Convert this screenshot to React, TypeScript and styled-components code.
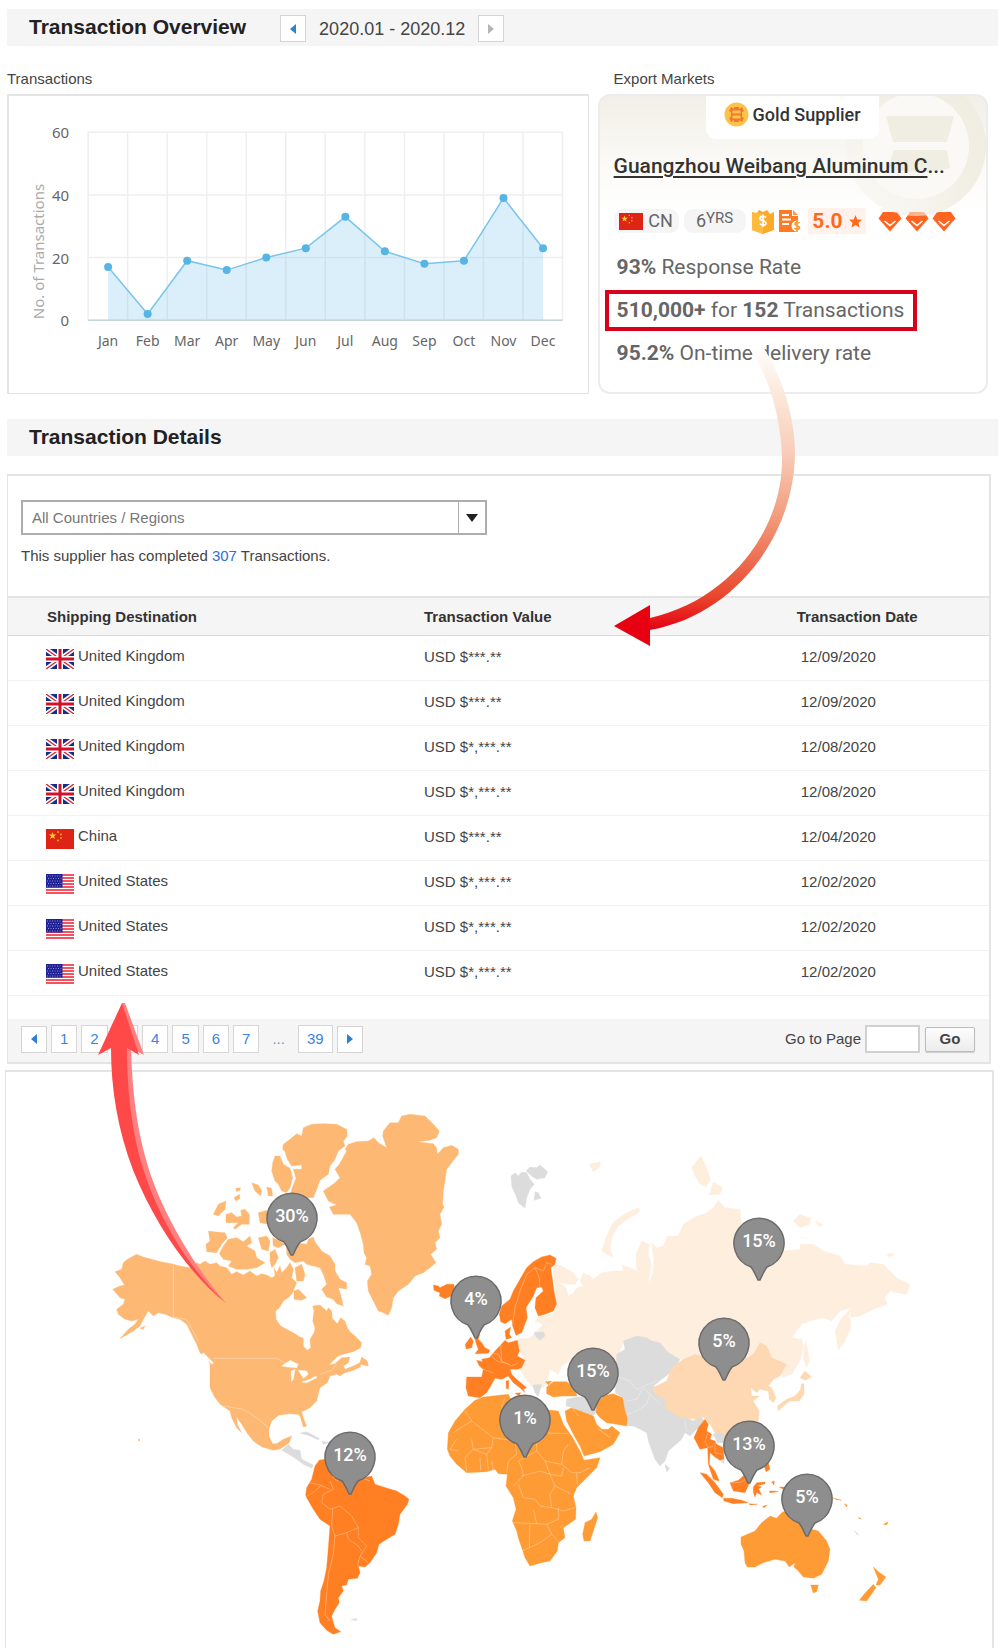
import React from "react";
import styled, { createGlobalStyle } from "styled-components";

const GlobalStyle = createGlobalStyle`
  *, *::before, *::after { box-sizing: border-box; }
  body { margin: 0; background: #fff; color: #444; font: 15px/20px "Liberation Sans", Arial, sans-serif; }
  h1, h2, h3, p { margin: 0; font-weight: normal; }
`;

const line = "#e4e4e4";

const Page = styled.main`
  position: relative;
  display: flex;
  flex-direction: column;
  padding-top: 9px;
`;

const SectionBar = styled.header<{ $spaced?: boolean }>`
  display: flex;
  align-items: center;
  gap: 34px;
  height: 37px;
  margin: ${(p) => (p.$spaced ? 25 : 0)}px 2px 0 7px;
  padding: 0 22px;
  background: #f5f5f5;
`;

const SectionTitle = styled.h2`
  padding-bottom: 2px;
  color: #222;
  font-size: 21px;
  line-height: 24px;
  font-weight: bold;
`;

const Period = styled.div`
  display: flex;
  align-items: center;
  gap: 13px;
  padding-top: 2px;
  font-size: 18px;
`;

const StepButton = styled.button<{ $muted?: boolean }>`
  display: grid;
  place-items: center;
  width: 26px;
  height: 27px;
  padding: 0;
  border: 1px solid #d4d4d4;
  background: #fff;
  color: ${(p) => (p.$muted ? "#b5b5b5" : "#2f80d0")};
`;

const Overview = styled.section`
  display: grid;
  grid-template-columns: 581fr 390fr;
  column-gap: 9px;
  margin: 23px 12px 0 7px;
`;

const Column = styled.div`
  display: flex;
  flex-direction: column;
  gap: 5px;
`;

const ColumnLabel = styled.h3<{ $inset?: boolean }>`
  padding-left: ${(p) => (p.$inset ? 16 : 0)}px;
  font-size: 15px;
`;

const ChartBox = styled.div`
  border: 1px solid ${line};
  border-width: 2px 1px 1px 2px;
  svg { display: block; width: 100%; font-family: "Noto Sans", sans-serif; }
`;

const Card = styled.article`
  position: relative;
  flex: 1;
  overflow: hidden;
  padding: 0 8px 0 14px;
  border: 2px solid #ececec;
  border-radius: 12px;
  background: linear-gradient(#f1efe6, #fbfaf7 70px, #fff 120px);
  font-family: Roboto, sans-serif;
  color: #666;
`;

const Watermark = styled.svg`
  position: absolute;
  top: 0;
  right: 0;
`;

const SupplierTab = styled.div`
  position: relative;
  display: flex;
  align-items: center;
  gap: 4px;
  width: 173px;
  height: 43px;
  margin-left: 92px;
  padding: 0 18px 6px;
  border-radius: 0 0 10px 10px;
  background: #fff;
  color: #333;
  font-size: 18px;
  font-weight: 500;
  white-space: nowrap;
`;

const Company = styled.h3`
  position: relative;
  margin-top: 13px;
  color: #333;
  font-size: 21px;
  line-height: 28px;
  font-weight: 500;
  white-space: nowrap;
  a { color: inherit; text-underline-offset: 3px; }
`;

const Badges = styled.div`
  display: flex;
  align-items: center;
  height: 24px;
  margin-top: 29px;
`;

const Pill = styled.span<{ $w: number }>`
  display: flex;
  align-items: center;
  justify-content: center;
  gap: 5px;
  width: ${(p) => p.$w}px;
  height: 24px;
  margin-right: 5px;
  border-radius: 9px;
  background: #f5f5f6;
  font-size: 18px;
  sup { font-size: 15px; line-height: 15px; vertical-align: 4px; }
`;

const Score = styled.span`
  display: flex;
  align-items: center;
  gap: 6px;
  height: 26px;
  margin-left: 6px;
  padding: 0 4px;
  background: #fff2ec;
  color: #ff6a1a;
  font-size: 21px;
  font-weight: bold;
`;

const Gems = styled.span`
  display: flex;
  gap: 3px;
  margin-left: 12px;
`;

const Stats = styled.div`
  display: flex;
  flex-direction: column;
  align-items: flex-start;
  gap: 2px;
  margin: 14px 0 0 -9px;
`;

const Stat = styled.p<{ $boxed?: boolean }>`
  padding: 0 9px 0 8px;
  border: 4px solid ${(p) => (p.$boxed ? "#d9001b" : "transparent")};
  font-size: 21px;
  line-height: 33px;
  white-space: nowrap;
`;

const Details = styled.section`
  margin: 18px 9px 0 7px;
  border: 2px solid ${line};
  border-width: 2px 2px 2px 1px;
`;

const Filter = styled.div`
  padding: 24px 13px 30px;
`;

const SelectBox = styled.div`
  position: relative;
  max-width: 466px;
  select {
    display: block;
    width: 100%;
    height: 35px;
    padding: 0 40px 0 9px;
    border: 2px solid #adadad;
    border-radius: 0;
    background: #fff;
    color: #777;
    font: inherit;
    appearance: none;
  }
`;

const SelectArrow = styled.span`
  position: absolute;
  top: 2px;
  right: 2px;
  bottom: 2px;
  display: grid;
  place-items: center;
  width: 27px;
  border-left: 1px solid #adadad;
  background: #fff;
  pointer-events: none;
`;

const Summary = styled.p`
  margin-top: 11px;
  a { color: #2f6fd0; text-decoration: none; }
`;

const Table = styled.table`
  width: 100%;
  border-collapse: collapse;
  table-layout: fixed;
  th, td { padding: 0; text-align: left; }
  th {
    height: 38px;
    border-top: 2px solid ${line};
    border-bottom: 1px solid #dadada;
    background: #f5f5f5;
    color: #333;
  }
  th:first-child { width: 42%; padding-left: 39px; }
  th:nth-child(2) { width: 38%; }
  th:not(:first-child), td:nth-child(2) { padding-left: 4px; }
  td { height: 45px; padding-bottom: 2px; border-bottom: 1px solid #f3f3f3; }
  td:first-child { padding: 0 0 0 38px; }
  td:last-child { padding-left: 8px; }
`;

const Destination = styled.span`
  display: flex;
  align-items: flex-start;
  gap: 4px;
  svg { margin-top: 3px; }
`;

const Footer = styled.footer`
  display: flex;
  align-items: center;
  gap: 4px;
  height: 43px;
  margin-top: 23px;
  padding: 0 14px 2px 13px;
  background: #f5f5f5;
`;

const PageButton = styled.button`
  height: 28px;
  padding: 0 8px;
  border: 1px solid #d6d6d6;
  background: #fff;
  color: #3b82e6;
  font: inherit;
`;

const Dots = styled.span`
  margin: 0 9px;
  color: #7d96b5;
`;

const GoForm = styled.form`
  display: flex;
  align-items: center;
  gap: 4px;
  margin-left: auto;
  input {
    width: 55px;
    height: 28px;
    border: 2px solid #d0d0d0;
    background: #fff;
    font: inherit;
  }
  button {
    width: 50px;
    height: 25px;
    margin-left: 1px;
    padding: 0;
    border: 1px solid #bcbcbc;
    border-radius: 2px;
    background: linear-gradient(#fdfdfd, #ececec);
    box-shadow: 0 1px 1px #ccc;
    color: #444;
    font: bold 15px/20px "Liberation Sans", Arial, sans-serif;
  }
`;

const MapBox = styled.section`
  margin: 6px 6px 0 5px;
  border: 2px solid ${line};
  border-width: 2px 2px 0 1px;
  svg { display: block; width: 100%; }
`;

const Arrows = styled.svg`
  position: absolute;
  top: 0;
  left: 0;
  width: 100%;
  pointer-events: none;
`;

const Triangle = ({ dir }: { dir: "left" | "right" }) => (
  <svg width="6" height="10" viewBox="0 0 6 10" aria-hidden>
    <path d={dir === "left" ? "M6 0v10L0 5z" : "M0 0v10l6-5z"} fill="currentColor" />
  </svg>
);

const monthly: [string, number][] = [
  ["Jan", 17], ["Feb", 2], ["Mar", 19], ["Apr", 16], ["May", 20], ["Jun", 23],
  ["Jul", 33], ["Aug", 22], ["Sep", 18], ["Oct", 19], ["Nov", 39], ["Dec", 23],
];

function LineChart() {
  const left = 79;
  const step = 39.5;
  const base = 224;
  const unit = 3.13;
  const pts = monthly.map(([, v], i) => [left + 20 + i * step, base - v * unit]);
  const path = pts.map((p) => p.join(",")).join(" L");
  return (
    <svg viewBox="0 0 578 297" role="img" aria-label="Transactions per month">
      {[0, 20, 40, 60].map((v) => (
        <g key={v}>
          <line x1={left} x2={left + 12 * step} y1={base - v * unit} y2={base - v * unit} stroke="#efefef" strokeWidth="1.5" />
          <text x="60" y={base - v * unit + 6} textAnchor="end" fontSize="15" fill="#666">{v}</text>
        </g>
      ))}
      {Array.from({ length: 13 }, (_, i) => (
        <line key={i} x1={left + i * step} x2={left + i * step} y1={base - 60 * unit} y2={base} stroke="#efefef" strokeWidth="1.5" />
      ))}
      <path d={`M${pts[0][0]},${base} L${path} L${pts[11][0]},${base}Z`} fill="#5bb8e6" fillOpacity=".22" />
      <line x1={left} x2={left + 12 * step} y1={base} y2={base} stroke="#c5d3da" strokeWidth="1.5" />
      <path d={`M${path}`} fill="none" stroke="#7cc5ea" strokeWidth="1.5" />
      {pts.map(([x, y], i) => (
        <g key={i}>
          <circle cx={x} cy={y} r="4" fill="#57b4e3" />
          <text x={x} y="250" textAnchor="middle" fontSize="14" fill="#666">{monthly[i][0]}</text>
        </g>
      ))}
      <text transform="translate(35 223) rotate(-90)" fontSize="15" fill="#aaa">No. of Transactions</text>
    </svg>
  );
}

type Country = "uk" | "cn" | "us";

function Flag({ country, width = 28, height = 20 }: { country: Country; width?: number; height?: number }) {
  return (
    <svg width={width} height={height} viewBox="0 0 28 20" preserveAspectRatio="none" aria-hidden>
      {country === "uk" && (
        <>
          <path d="M0 0h28v20H0z" fill="#12308a" />
          <path d="M0 0l28 20M28 0L0 20" stroke="#fff" strokeWidth="4.6" />
          <path d="M0 0l28 20M28 0L0 20" stroke="#d9263c" strokeWidth="1.4" />
          <path d="M14 0v20M0 10h28" stroke="#fff" strokeWidth="6" />
          <path d="M14 0v20M0 10h28" stroke="#d0122c" strokeWidth="3" />
        </>
      )}
      {country === "cn" && (
        <>
          <path d="M0 0h28v20H0z" fill="#de2414" />
          <path d="M6.500 3l1 2.500 2.700.1-2.100 1.700.8 2.700-2.400-1.500L4.200 10l.8-2.700-2.100-1.700 2.700-.1z" fill="#ffce31" />
          <g fill="#ffb52e"><circle cx="12" cy="3" r=".9" /><circle cx="15" cy="5.500" r=".9" /><circle cx="15" cy="9" r=".9" /><circle cx="12" cy="11.500" r=".9" /></g>
        </>
      )}
      {country === "us" && (
        <>
          <path d="M0 0h28v20H0z" fill="#fff" />
          <path d="M0 1h28M0 4h28M0 7h28M0 10h28M0 13h28M0 16h28M0 19h28" stroke="#ee1c2e" strokeWidth="1.700" />
          <path d="M0 0h16.500v13.500H0z" fill="#1f1f96" />
          <path d="M1 2h15M2 4.500h14M1 7h15M2 9.500h14M1 12h15" stroke="#8f8fd8" strokeWidth="1" strokeDasharray="1 1.500" />
        </>
      )}
    </svg>
  );
}

const Medal = () => (
  <svg width="25" height="25" viewBox="0 0 25 25" aria-hidden>
    <circle cx="12.500" cy="12.500" r="12" fill="#fbc34c" />
    <path d="M7 5l3 2V5h5v2l3-2 2 4-2 1v5l2 1-2 4-3-2v2h-5v-2l-3 2-2-4 2-1v-5L5 9z" fill="#ee7a2c" />
    <path d="M8.500 8.500h8v3h-8zM8.500 13.500h8v3h-8z" fill="#fbc34c" />
  </svg>
);

const MoneyShield = () => (
  <svg width="24" height="26" viewBox="0 0 24 26" aria-hidden>
    <path d="M1 4l4 2 3-4 4 2 4-2 3 4 4-2v18l-11 4-11-4z" fill="#ffa928" />
    <path d="M1 4l11 2v20L1 22z" fill="#ffbb3d" />
    <path d="M15 9.500c-1-1.500-6-1.800-6 1s6 1.700 6 4.500-5 2.500-6 .7M12 6.500v12.500" fill="none" stroke="#fff" strokeWidth="1.700" />
  </svg>
);

const Invoice = () => (
  <svg width="24" height="24" viewBox="0 0 24 24" aria-hidden>
    <path d="M1 1h13v6h6v16H1z" fill="#ff7a22" />
    <path d="M15 1l5 5h-5z" fill="#ff9a50" />
    <path d="M4 6h7M4 10.500h9M4 15h7" stroke="#fff" strokeWidth="1.800" />
    <circle cx="19" cy="17" r="5.500" fill="#fff" />
    <path d="M21.500 14c-1-1-4.500-1-4.500 1s4.500 1.500 4.500 3.500-4 2-5 .5M19 11.500v11" fill="none" stroke="#ff9a30" strokeWidth="1.700" />
  </svg>
);

const Star = () => (
  <svg width="13" height="13" viewBox="0 0 12 12" aria-hidden>
    <path d="M6 0l1.700 4.100 4.300.3-3.300 2.800 1 4.300L6 9.200l-3.700 2.300 1-4.300L0 4.400l4.300-.3z" fill="#ff6a1a" />
  </svg>
);

const Gem = () => (
  <svg width="24" height="21" viewBox="0 0 24 21" aria-hidden>
    <path d="M5 1h14l4.500 6.500L12 20.500.5 7.500z" fill="#ff6420" />
    <path d="M6.500 10l5.500 4.500L17.500 10" fill="none" stroke="#fff" strokeWidth="1.600" />
  </svg>
);

type Shape = { fill: string; d: string };

const northAmerica: Shape[] = [
  { fill: "#fdb974", d: "M75,572 95,565 100,545 112,535 140,520 160,528 185,535 215,543 245,548 270,555 300,560 320,545 330,550 345,540 360,550 380,545 390,555 410,560 425,580 440,572 460,582 480,570 500,585 515,578 530,582 545,590 555,585 552,560 560,575 570,555 575,575 590,560 600,545 610,565 605,590 620,605 612,625 605,640 595,650 580,660 568,680 557,690 558,715 572,735 590,745 610,755 630,768 640,772 640,795 652,808 662,800 660,775 672,755 675,740 668,720 672,690 668,675 690,672 710,690 715,680 725,690 727,712 742,728 752,710 765,720 772,740 780,752 795,765 815,785 812,800 790,812 765,818 745,825 730,838 718,852 735,848 755,830 780,828 775,845 760,855 765,865 790,855 810,845 812,858 790,868 765,875 750,885 740,880 720,885 712,905 690,920 685,940 680,960 660,980 635,993 640,1010 650,1035 640,1038 630,1005 623,1000 600,998 566,1003 545,1020 537,1044 537,1066 548,1088 560,1088 580,1075 605,1065 598,1085 570,1104 550,1108 516,1098 490,1080 471,1056 455,1030 440,1008 442,1030 455,1055 440,1040 425,1010 420,990 392,971 375,950 360,920 360,850 350,830 330,815 320,790 305,760 290,730 270,715 250,710 225,700 205,695 190,705 175,690 160,715 150,735 130,750 110,762 90,773 115,745 135,730 145,715 125,720 105,715 85,700 80,685 100,670 105,655 90,650 68,625 90,615 103,612 90,590Z" },
  { fill: "#fdb974", d: "M700,330 735,305 750,290 735,265 748,250 770,210 765,205 775,190 800,182 835,180 852,170 865,185 890,200 878,165 880,150 900,125 925,125 935,105 960,100 1005,105 1030,130 1048,150 1040,170 1020,178 980,182 1030,188 1040,200 1042,220 1060,200 1085,193 1105,205 1105,220 1085,245 1070,265 1065,300 1060,330 1058,370 1062,378 1050,400 1055,430 1045,450 1050,470 1035,485 1040,505 1022,520 1038,545 1020,560 1000,575 975,585 955,610 925,630 910,650 905,680 895,703 880,695 865,690 850,660 835,630 832,600 845,580 840,555 825,550 830,530 822,515 820,490 812,460 800,425 780,400 730,400 718,378 740,372 715,360Z" },
  { fill: "#fdb974", d: "M580,190 600,175 620,158 635,165 640,140 665,130 700,128 740,130 770,145 772,165 760,180 765,195 745,210 735,235 720,255 715,280 690,298 682,320 670,350 600,350 605,325 618,292 610,265 635,265 635,252 605,255 592,235 585,212 578,205ZM548,245 555,225 570,225 580,250 600,262 608,290 600,320 590,335 575,330 565,310 555,300 545,270ZM485,305 505,312 515,330 512,345 495,330ZM530,318 545,322 548,345 535,345ZM437,322 452,320 450,328 440,332ZM432,350 448,340 450,352 438,360ZM370,400 385,370 408,360 405,385 385,405ZM408,400 425,395 440,408 455,405 452,388 465,385 478,400 478,430 455,430 435,445 430,440 445,425 408,425ZM505,395 530,388 535,430 510,425ZM355,450 380,453 405,455 412,470 395,490 380,515 350,512 348,490 360,480ZM388,518 400,495 415,475 440,470 460,482 480,465 485,485 470,495 495,510 500,530 525,545 500,560 470,565 440,565 415,555 425,540 400,535ZM505,470 530,465 540,480 535,510 515,505ZM548,470 565,478 585,490 565,500 550,495ZM540,515 555,505 565,530 555,550 545,560 540,540ZM590,520 590,490 620,485 650,490 655,475 670,468 675,482 695,510 720,525 735,550 735,570 750,595 770,605 770,625 745,620 752,640 760,675 740,668 730,655 710,648 695,625 710,610 700,580 690,560 670,555 650,550 640,540 615,545 600,535ZM615,560 635,550 645,580 640,600 620,600ZM612,630 625,625 650,650 635,658 612,655ZM808,850 815,828 832,840 835,855ZM150,742 165,735 160,745Z" },
  { fill: "#fff", d: "M575,855 600,838 625,850 620,860 590,858ZM603,870 615,865 610,895 605,902ZM625,868 650,870 655,880 640,892ZM635,903 660,895 678,885 680,890 650,905ZM340,815 370,845 366,850 335,822Z" },
];

const southAmerica: Shape[] = [
  { fill: "#ff7f22", d: "M118,237 140,235 160,290 250,290 275,285 285,310 310,318 350,330 375,345 387,355 382,370 360,400 355,430 345,460 320,475 297,490 290,515 270,545 255,558 235,555 240,575 232,592 205,595 200,612 185,615 190,630 175,650 178,665 165,685 155,705 160,725 165,740 182,752 160,760 140,748 120,725 113,690 120,660 122,630 132,600 140,560 145,500 150,435 120,415 100,385 80,350 77,342 80,320 95,295 105,255Z" },
  { fill: "#dcdcdc", d: "M5,208 25,190 40,205 60,208 65,235 100,252 95,262 70,250 50,235 30,222ZM60,156 80,152 118,172 115,177 90,165ZM125,180 148,185 130,190ZM212,716 232,712 228,719Z" },
];

const eurasia: Shape[] = [
  { fill: "#feeedd", d: "M368,430 395,435 430,455 445,475 435,490 415,490 390,485 408,500 415,525 430,515 440,500 460,495 450,480 460,455 480,465 490,475 515,455 545,450 580,450 575,432 600,440 620,450 618,400 635,360 658,370 655,400 664,430 655,490 668,460 672,420 665,365 680,380 700,375 712,345 745,345 760,310 790,290 830,275 850,260 865,238 885,260 930,265 933,300 950,400 1110,385 1110,370 1150,370 1180,390 1230,405 1245,430 1310,435 1320,425 1360,430 1400,470 1440,490 1430,520 1400,515 1380,510 1365,530 1372,550 1330,565 1290,585 1255,590 1265,560 1230,570 1205,600 1180,590 1140,600 1115,610 1085,650 1115,655 1120,680 1110,720 1085,760 1055,770 1060,730 1000,700 770,720 750,715 700,690 640,650 580,665 570,690 560,760 500,765 420,720 395,735 385,760 360,745 350,785 340,800 310,800 285,770 270,745 285,718 268,690 262,655 300,650 340,610 315,600 325,588 370,580 382,555ZM1265,560 1235,590 1215,630 1225,688 1245,660 1262,620 1260,590ZM1125,660 1120,710 1130,740 1138,720 1132,680ZM515,390 530,345 548,305 590,275 625,260 630,272 600,290 565,315 545,350 540,385 550,408 530,400ZM785,140 812,105 830,140 842,175 828,198 810,190 795,165ZM838,222 850,182 878,200 870,220ZM478,130 510,122 512,135 490,152ZM1090,300 1110,280 1142,292 1140,310 1110,320ZM1155,300 1180,312 1170,318ZM1110,348 1130,352ZM1370,402 1385,395 1392,402 1380,408Z" },
  { fill: "#dcdcdc", d: "M243,165 255,155 265,165 275,153 290,155 300,175 313,190 300,205 290,230 285,262 265,245 258,225 245,195ZM288,150 300,138 320,140 330,132 353,152 345,170 320,175 305,165ZM315,212 325,215 333,232 312,238ZM312,635 340,632 345,645 330,658 318,648ZM560,700 585,685 580,660 620,645 650,650 665,660 690,665 715,695 750,715 735,740 715,760 670,795 700,810 715,855 760,885 790,900 810,885 825,900 795,930 780,945 765,935 755,955 715,990 705,1020 690,1035 675,1015 655,960 650,935 630,925 610,915 590,915 585,885 580,830 555,815 560,770ZM410,835 440,828 475,828 500,860 495,880 480,885 450,870 430,860 408,855ZM308,792 335,790 325,825 315,815ZM705,1030 718,1042 712,1052ZM850,940 880,930 890,960 870,965Z" },
  { fill: "#ff7f22", d: "M10,492 25,495 30,500 50,490 72,490 75,520 45,533 28,525 30,515 12,508ZM208,580 215,555 240,535 250,510 270,475 290,440 310,422 335,408 360,402 378,412 375,430 362,440 368,480 372,510 380,550 370,570 345,580 325,585 315,560 318,530 340,510 335,498 320,500 310,525 288,560 292,590 275,635 258,643 248,615 245,595 225,608 212,602ZM225,630 242,618 238,640 245,650 228,655ZM106,670 122,648 130,660 125,680 108,684ZM150,640 145,655 155,665 165,680 180,688 175,697 135,698 145,685 140,672 135,655ZM140,718 158,722 155,715 178,710 195,690 212,672 225,658 235,665 262,658 268,690 262,705 285,718 275,740 262,745 240,745 245,760 260,775 290,800 280,805 285,815 270,800 250,785 235,765 215,775 195,772 185,790 170,815 150,830 115,825 108,800 110,768 155,768 160,745 148,735ZM255,817 272,815 268,825ZM228,780 236,778 236,803 229,803Z" },
];

const africa: Shape[] = [
  { fill: "#ff9b35", d: "M105,145 135,118 160,108 235,100 250,130 300,145 365,148 385,150 400,190 425,225 450,270 462,298 480,295 510,290 500,320 470,350 440,380 430,405 438,440 437,475 400,500 405,530 385,545 382,570 360,600 335,605 300,615 285,590 265,530 260,510 247,480 258,445 250,410 228,375 232,340 205,338 195,325 170,332 110,335 80,310 60,285 52,265 55,215 75,180ZM405,150 425,140 450,150 490,165 500,190 515,205 535,205 545,195 570,215 550,250 510,272 462,285 450,255 430,220 410,180ZM500,130 520,105 550,98 578,110 585,150 592,170 590,195 560,190 530,185 510,170 498,155ZM350,78 370,62 410,62 440,85 440,105 400,105 370,108 350,98ZM347,62 365,60 355,72ZM498,453 503,470 490,510 480,540 462,540 458,520 465,485 485,475Z" },
];

const eastAsia: Shape[] = [
  { fill: "#fdd8b2", d: "M38,770 80,750 95,710 130,685 165,670 230,690 300,690 340,670 360,635 380,645 395,680 440,700 420,735 400,745 385,765 395,770 408,800 400,815 388,805 385,780 360,775 350,785 332,770 335,795 358,795 340,810 358,840 355,870 330,890 290,925 240,920 225,905 210,880 190,858 170,865 120,860 75,830 75,805 45,790ZM480,740 495,720 515,738 495,748ZM484,758 492,758 492,790 478,810 450,810 430,825 415,840 412,825 440,805 465,795 482,775Z" },
];

const oceania: Shape[] = [
  { fill: "#ff7f22", d: "M102,170 115,140 135,115 145,130 140,150 155,160 150,175 165,180 170,190 190,200 192,235 180,238 165,228 150,215 148,250 165,270 178,300 160,295 145,250 143,200 120,205ZM120,275 140,280 165,305 190,340 187,350 165,335 145,305ZM190,352 215,352 245,358 265,365 220,368 192,360ZM210,305 235,298 255,280 275,290 262,320 255,335 220,330ZM280,318 290,305 315,303 315,308 292,314 305,318 296,324 305,342 290,335 285,348 280,335ZM312,255 325,245 330,265 318,272ZM335,303 343,300 342,312ZM358,318 375,318 372,326ZM328,330 342,330 355,332 330,335ZM268,368 292,370 270,372ZM308,376 322,372 312,380Z" },
  { fill: "#ff9b35", d: "M243,468 285,450 305,425 330,405 350,412 368,392 400,395 430,430 455,445 475,450 500,480 510,505 505,540 485,580 460,592 430,588 415,570 402,558 405,545 388,558 375,540 345,535 310,545 285,558 262,558 255,545 252,510 243,490ZM452,612 475,612 470,632 460,636ZM640,558 655,572 678,588 660,612 648,612 655,595ZM640,610 648,620 620,660 598,658 612,640ZM518,350 545,358 530,356ZM552,368 562,372 560,378ZM670,430 685,422 680,432ZM596,408 604,414 598,414Z" },
  { fill: "#dcdcdc", d: "M160,160 180,155 192,160 190,185 172,185ZM15,252 25,262 20,272ZM582,448 598,462 590,460ZM182,240 195,235 190,248Z" },
];

const regions: { x: number; y: number; shapes: Shape[]; borders?: string }[] = [
  { x: 90, y: 1080, shapes: northAmerica, borders: "M250,550V708L290,715 325,780M370,832H560L600,855M690,880 725,868 740,850M400,975 460,985 500,1010 535,1040" },
  { x: 280, y: 1380, shapes: southAmerica, borders: "M90,305 120,312 150,325M80,345 100,335 125,312M150,300 160,325 130,340 125,365 150,385 180,375 215,405 235,440 200,455 165,465 155,435 158,385M165,465 160,520 145,580 140,640 135,700 150,720M200,455 205,475 235,495 245,510M235,440 235,470 260,495 240,525 232,555M240,525 265,545M165,295 175,300M245,290 270,300" },
  { x: 430, y: 1120, shapes: eurasia, borders: "M248,610 255,560 270,510 290,460 315,440 340,450 350,425 365,430M315,440 328,470 330,500M185,695 205,700 215,720 245,735 265,725M215,720 212,670M160,745 190,755M180,700 200,720 240,730M560,765 600,780 620,805 655,790 680,780M590,840 620,835 640,800 660,820 650,850 620,870 590,880M715,860 760,890 790,885M660,820 690,850M765,900 770,930" },
  { x: 430, y: 1360, shapes: africa, borders: "M105,150 125,180 70,215M125,180 190,230 185,260 130,265 125,235M225,110 215,140 235,180 300,190 320,200M315,150 318,215 415,218M190,230 255,240 265,200M80,235 60,265 85,270M110,330 105,290 130,265 170,280 185,260M185,300 190,325M170,280 175,325M150,290 152,328M255,240 260,280 235,300 230,335M320,200 320,270 265,300 275,320M320,270 345,300 395,310 400,270 415,250M395,310 425,335 450,335 480,320M345,300 360,340 395,345 400,320M275,320 280,345 250,375M275,345 330,330 360,340 375,375 360,400 365,440 330,435 315,415 280,410 265,370M375,375 425,400M365,440 400,450 435,440M250,485 320,488 310,445M320,488 350,490 385,475 385,440M300,490 298,560 275,570M298,560 330,545 365,520 350,490M365,520 385,540M390,500 400,490M440,335 442,370M500,200 540,230M425,140 445,165" },
  { x: 640, y: 1130, shapes: eastAsia },
  { x: 660, y: 1380, shapes: oceania, borders: "M145,155 135,180 145,200 160,195M165,185 165,215 185,220M215,305 240,305 258,295" },
];

const pins: [string, number, number][] = [
  ["30%", 292, 1217], ["4%", 476, 1300], ["15%", 593, 1372], ["1%", 525, 1419], ["12%", 350, 1456],
  ["15%", 759, 1242], ["5%", 724, 1342], ["13%", 749, 1445], ["5%", 807, 1498],
];

function WorldMap() {
  return (
    <svg viewBox="6 1071 986 577" role="img" aria-label="Export markets by region">
      {regions.map((r, i) => (
        <g key={i} transform={`translate(${r.x} ${r.y}) scale(${1 / 3})`}>
          {r.shapes.map((s, j) => (
            <path key={j} d={s.d} fill={s.fill} stroke={s.fill} strokeWidth="1" strokeLinejoin="round" />
          ))}
          {r.borders && <path d={r.borders} fill="none" stroke="#fff" strokeOpacity=".3" strokeWidth="3" strokeLinejoin="round" />}
        </g>
      ))}
      <circle cx="139" cy="1439" r="1" fill="#fdb974" />
      {pins.map(([label, x, y], i) => (
        <g key={i} transform={`translate(${x} ${y})`}>
          <path d="M-8 24A25 25 0 1 1 8 24Q5 28 1 37H-1Q-5 28 -8 24Z" fill="#8e8e8e" stroke="#6b6b6b" strokeWidth="1.5" />
          <text y="4" textAnchor="middle" fontFamily="Roboto, sans-serif" fontSize="18" fontWeight="500" fill="#fff">{label}</text>
        </g>
      ))}
    </svg>
  );
}

const orders: [Country, string, string, string][] = [
  ["uk", "United Kingdom", "USD $***.**", "12/09/2020"],
  ["uk", "United Kingdom", "USD $***.**", "12/09/2020"],
  ["uk", "United Kingdom", "USD $*,***.**", "12/08/2020"],
  ["uk", "United Kingdom", "USD $*,***.**", "12/08/2020"],
  ["cn", "China", "USD $***.**", "12/04/2020"],
  ["us", "United States", "USD $*,***.**", "12/02/2020"],
  ["us", "United States", "USD $*,***.**", "12/02/2020"],
  ["us", "United States", "USD $*,***.**", "12/02/2020"],
];

export default function App() {
  return (
    <>
      <GlobalStyle />
      <Page>
        <SectionBar>
          <SectionTitle>Transaction Overview</SectionTitle>
          <Period>
            <StepButton aria-label="Previous period"><Triangle dir="left" /></StepButton>
            <span>2020.01 - 2020.12</span>
            <StepButton $muted aria-label="Next period"><Triangle dir="right" /></StepButton>
          </Period>
        </SectionBar>

        <Overview>
          <Column>
            <ColumnLabel>Transactions</ColumnLabel>
            <ChartBox><LineChart /></ChartBox>
          </Column>
          <Column>
            <ColumnLabel $inset>Export Markets</ColumnLabel>
            <Card>
              <Watermark width="150" height="130" viewBox="0 0 150 130" aria-hidden>
                <defs>
                  <linearGradient id="ring" x1="0" y1="0" x2="1" y2="0">
                    <stop offset="0" stopColor="#f1efe6" stopOpacity=".3" />
                    <stop offset="1" stopColor="#efecdf" stopOpacity=".9" />
                  </linearGradient>
                </defs>
                <circle cx="80" cy="50" r="70" fill="url(#ring)" />
                <circle cx="80" cy="50" r="53" fill="#faf9f5" />
                <path d="M50 20H118L111 46H57ZM58 54H111L114 72Q84 80 52 72Z" fill="#f0eee3" />
              </Watermark>
              <SupplierTab><Medal />Gold Supplier</SupplierTab>
              <Company><a href="#company">Guangzhou Weibang Aluminum C</a>...</Company>
              <Badges>
                <Pill $w={65}><Flag country="cn" width={24} height={17} />CN</Pill>
                <Pill $w={62}><span>6<sup>YRS</sup></span></Pill>
                <MoneyShield />
                <span>&nbsp;</span>
                <Invoice />
                <Score>5.0 <Star /></Score>
                <Gems><Gem /><Gem /><Gem /></Gems>
              </Badges>
              <Stats>
                <Stat><b>93%</b> Response Rate</Stat>
                <Stat $boxed><b>510,000+</b> for <b>152</b> Transactions</Stat>
                <Stat><b>95.2%</b> On-time delivery rate</Stat>
              </Stats>
            </Card>
          </Column>
        </Overview>

        <SectionBar $spaced>
          <SectionTitle>Transaction Details</SectionTitle>
        </SectionBar>

        <Details>
          <Filter>
            <SelectBox>
              <select aria-label="Country or region" defaultValue="all">
                <option value="all">All Countries / Regions</option>
              </select>
              <SelectArrow>
                <svg width="12" height="8" viewBox="0 0 12 8" aria-hidden><path d="M0 0h12L6 8z" fill="#222" /></svg>
              </SelectArrow>
            </SelectBox>
            <Summary>This supplier has completed <a href="#all">307</a> Transactions.</Summary>
          </Filter>
          <Table>
            <thead>
              <tr><th>Shipping Destination</th><th>Transaction Value</th><th>Transaction Date</th></tr>
            </thead>
            <tbody>
              {orders.map(([country, name, value, date], i) => (
                <tr key={i}>
                  <td><Destination><Flag country={country} />{name}</Destination></td>
                  <td>{value}</td>
                  <td>{date}</td>
                </tr>
              ))}
            </tbody>
          </Table>
          <Footer>
            <StepButton aria-label="Previous page"><Triangle dir="left" /></StepButton>
            {[1, 2, 3, 4, 5, 6, 7].map((n) => <PageButton key={n}>{n}</PageButton>)}
            <Dots>...</Dots>
            <PageButton>39</PageButton>
            <StepButton aria-label="Next page"><Triangle dir="right" /></StepButton>
            <GoForm onSubmit={(e) => e.preventDefault()}>
              <label htmlFor="page-number">Go to Page</label>
              <input id="page-number" type="text" />
              <button type="submit">Go</button>
            </GoForm>
          </Footer>
        </Details>

        <MapBox><WorldMap /></MapBox>

        <Arrows viewBox="0 0 1000 1648" aria-hidden>
          <defs>
            <linearGradient id="fade" gradientUnits="userSpaceOnUse" x1="0" y1="346" x2="0" y2="630">
              <stop offset="0" stopColor="#fff" />
              <stop offset=".18" stopColor="#fce6d9" />
              <stop offset=".38" stopColor="#f8ccb8" />
              <stop offset=".6" stopColor="#f29c7c" />
              <stop offset=".88" stopColor="#e9472d" />
              <stop offset="1" stopColor="#e60012" />
            </linearGradient>
          </defs>
          <path d="M763 347C780 372 795 415 795 452C795 535 735 615 650 630V618C730 600 782 530 782 460C782 425 770 375 750 350Z" fill="url(#fade)" />
          <path d="M614 626L650 605V646Z" fill="#e60012" />
          <path d="M122 1003H125L144 1055L131 1048C132 1090 137 1130 147 1163C158 1203 190 1262 226 1303C185 1265 155 1210 140 1165C130 1130 125 1090 125 1048Z" fill="#ff8080" />
          <path d="M122 1003L139 1055L127 1048C127 1095 133 1135 142 1165C155 1210 185 1265 226 1303C190 1275 155 1225 133 1170C118 1130 111 1090 111 1048L98 1055Z" fill="#ff4848" />
        </Arrows>
      </Page>
    </>
  );
}
